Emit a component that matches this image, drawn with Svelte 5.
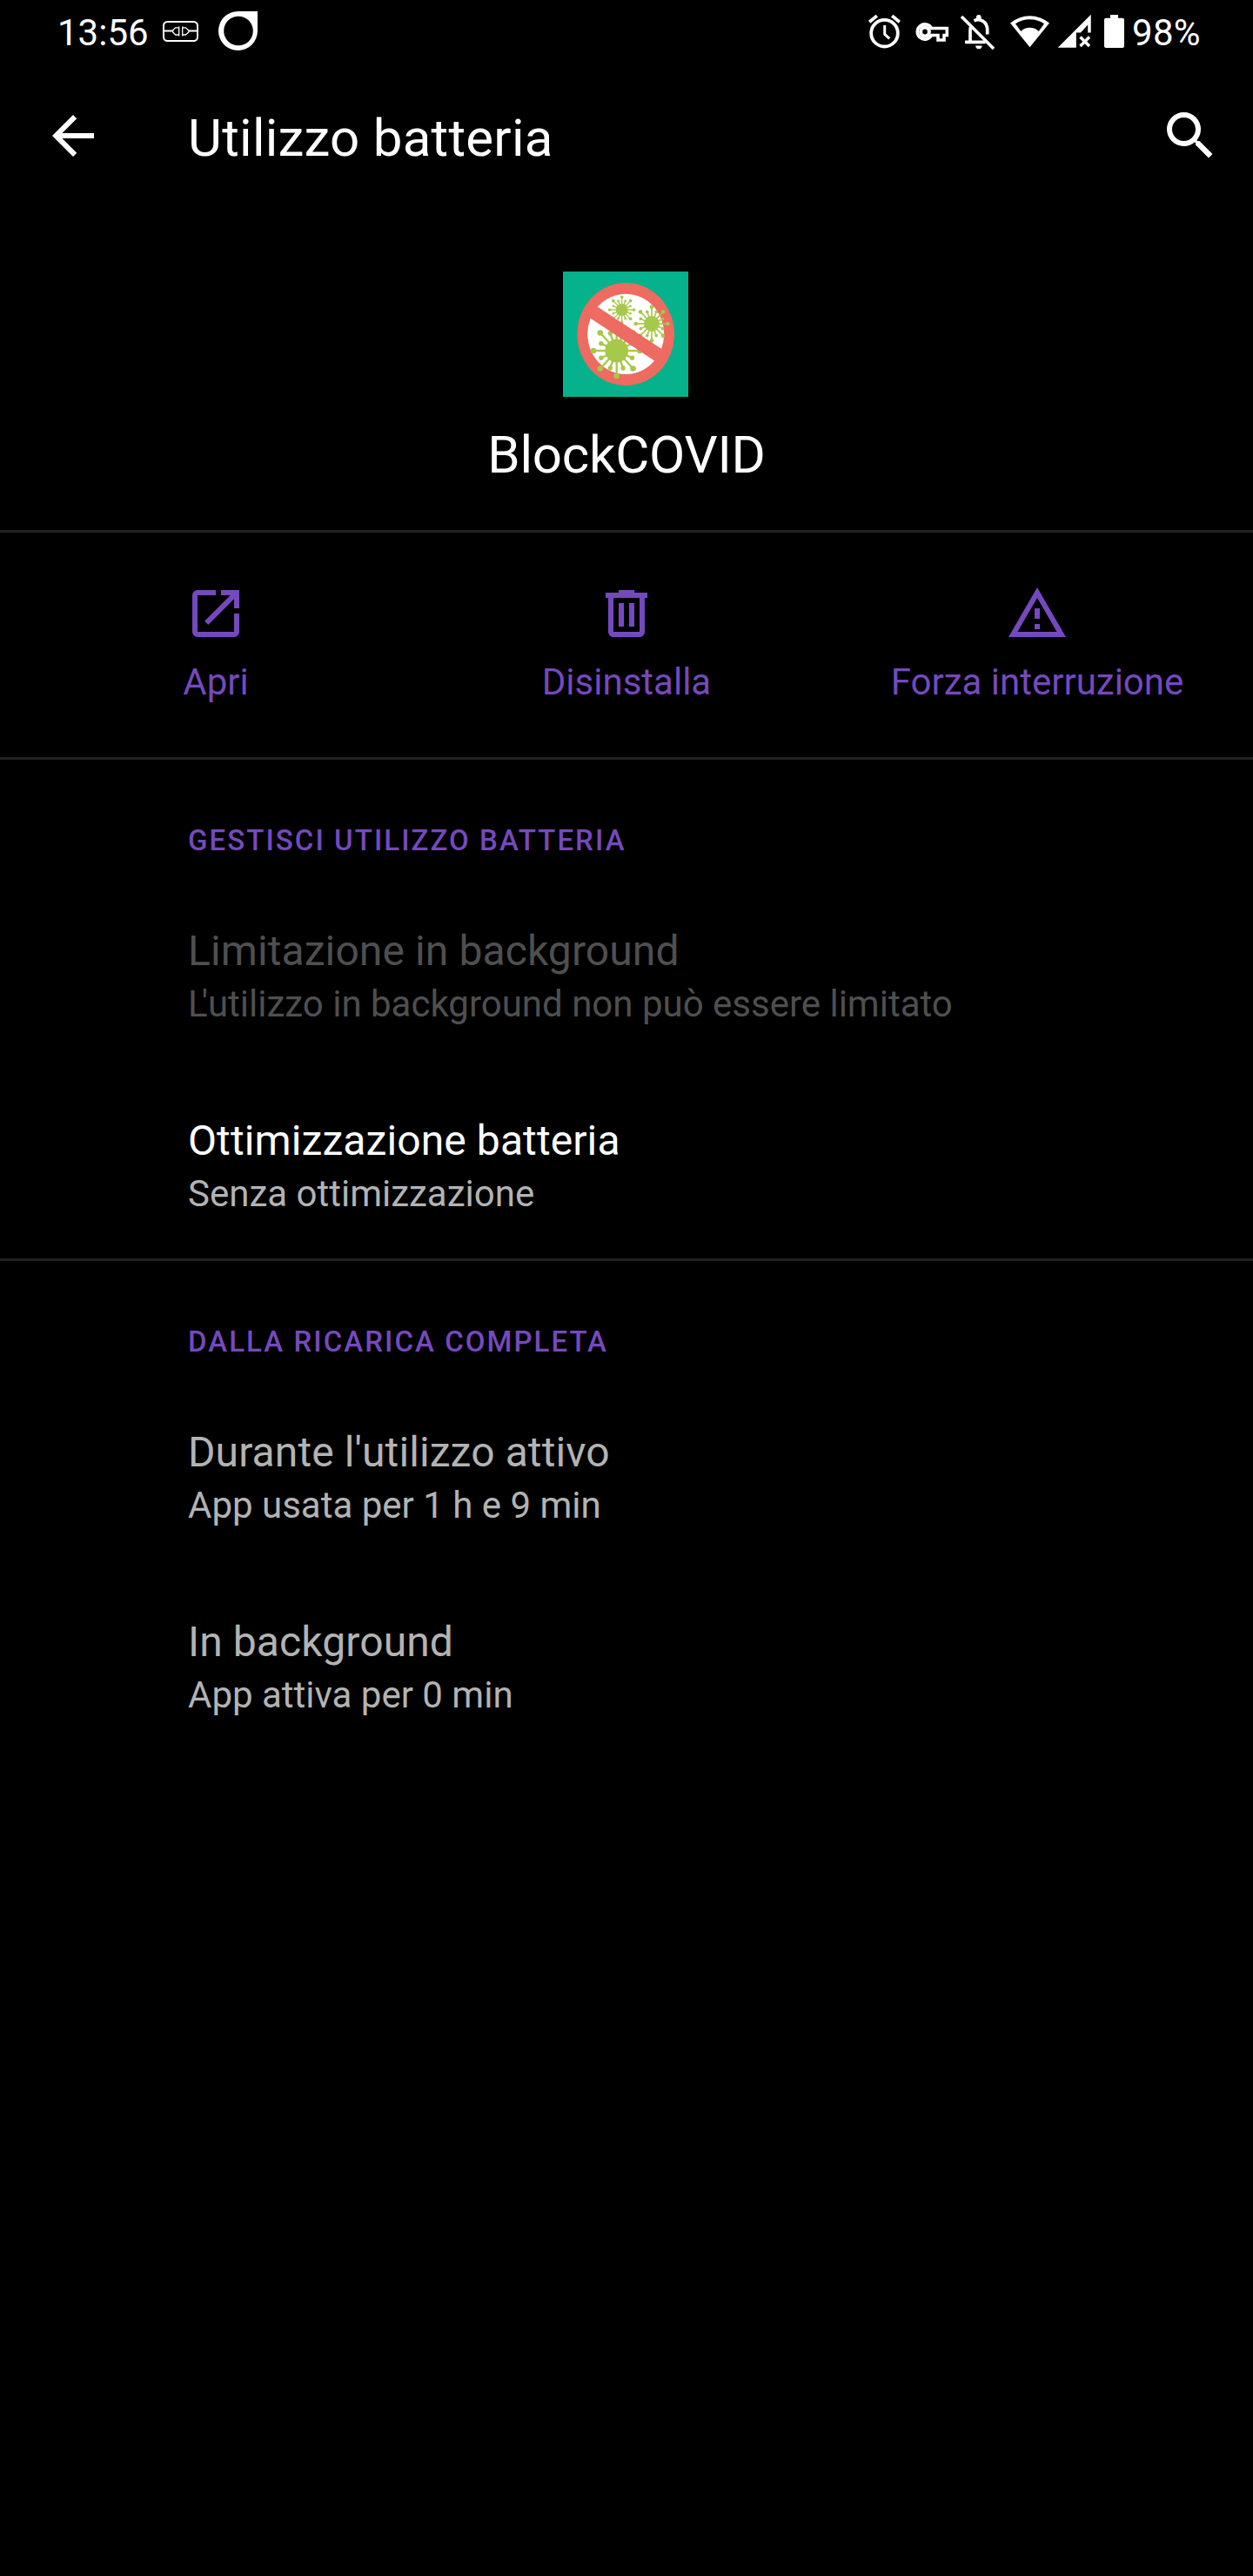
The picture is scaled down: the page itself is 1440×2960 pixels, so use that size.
<script>
  // Each virus: centre, body radius, long and short arm reach, arm width, tip radii
  const viruses = [
    { x: 236, y: 309, r: 40, lx: 80, ly: 87, sx: 58, sy: 65, w: 7, tip: 10, small: 8 },
    { x: 357, y: 216, r: 27, lx: 55, ly: 58, sx: 41, sy: 44, w: 5, tip: 7, small: 5.5 },
    { x: 254, y: 168, r: 21, lx: 42, ly: 44, sx: 32, sy: 33, w: 4, tip: 5.5, small: 4 }
  ];

  function arms(v) {
    return Array.from({ length: 16 }, (_, i) => {
      const a = (i * Math.PI) / 8;
      const long = i % 2 === 0;
      return {
        x: v.x + Math.cos(a) * (long ? v.lx : v.sx),
        y: v.y + Math.sin(a) * (long ? v.ly : v.sy),
        r: long ? v.tip : v.small
      };
    });
  }

  const actions = [
    {
      label: 'Apri',
      paths: [
        'M11 3H5a2 2 0 0 0-2 2v14a2 2 0 0 0 2 2h14a2 2 0 0 0 2-2v-7h-2v7H5V5h7V3z',
        'M14 3v2h3.600L7.700 14.900l1.400 1.400L19 6.400V10h2V3z'
      ]
    },
    {
      label: 'Disinstalla',
      paths: [
        'M15 4V3H9v1H4v2h1v13c0 1.100.9 2 2 2h10c1.100 0 2-.9 2-2V6h1V4h-5zm2 15H7V6h10v13z',
        'M9 8h2v9H9zm4 0h2v9h-2z'
      ]
    },
    {
      label: 'Forza interruzione',
      paths: ['M12 5.990L19.530 19H4.470L12 5.990M12 2L1 21h22L12 2zm1 14h-2v2h2v-2zm0-6h-2v4h2v-4z']
    }
  ];

  const sections = [
    {
      title: 'GESTISCI UTILIZZO BATTERIA',
      items: [
        { title: 'Limitazione in background', lead: 'L', summary: "'utilizzo in background non può essere limitato", tone: 'disabled' },
        { title: 'Ottimizzazione batteria', summary: 'Senza ottimizzazione', tone: 'active' }
      ]
    },
    {
      title: 'DALLA RICARICA COMPLETA',
      items: [
        { title: "Durante l'utilizzo attivo", summary: 'App usata per 1 h e 9 min', tone: 'info' },
        { title: 'In background', summary: 'App attiva per 0 min', tone: 'info' }
      ]
    }
  ];
</script>

<div class="screen">
  <div class="status">
    <span class="clock">13:56</span>
    <svg class="left-icons" width="120" height="72" viewBox="180 0 120 72" fill="none" stroke="#fff">
      <rect x="188" y="24.900" width="39" height="22.200" rx="4.500" stroke-width="2" />
      <path d="M188 35.500h10M217 35.500h10" stroke-width="1.900" />
      <path d="M205.700 30.500v11M209.700 30.500v11" stroke-width="1.300" />
      <path d="M205.700 31.800h-4l-3 3v2.200l3 3h4M209.700 31.800h3.600l3.500 3v2.200l-3.500 3h-3.600" stroke-width="1.300" />
      <path d="M296 13V35.500A22.500 22.500 0 1 1 273.500 13ZM274 18.700A16.800 16.800 0 1 0 274 52.300A16.800 16.800 0 1 0 274 18.700Z" fill="#fff" fill-rule="evenodd" stroke="none" />
    </svg>
    <span class="spacer"></span>
    <svg width="54" height="72" viewBox="990 0 54 72" fill="none" stroke="#fff">
      <circle cx="1016.500" cy="38.200" r="15.300" stroke-width="3.800" />
      <path d="M1016.700 29v10.300l5.500 5" stroke-width="3" />
      <path d="M999.200 25.200l8.600-7.100M1033.800 25.200l-8.600-7.100" stroke-width="3.800" />
    </svg>
    <svg width="54" height="72" viewBox="1044 0 54 72" fill="none" stroke="#fff" stroke-width="3.600">
      <path d="M1070.500 32.500h17.800v8h-3.300v5.500h-7v-5.500h-7.500a8.600 8.600 0 1 1 0-8z" />
      <circle cx="1063" cy="36.500" r="4.900" stroke-width="4" />
    </svg>
    <svg width="54" height="72" viewBox="1098 0 54 72" fill="none" stroke="#fff" stroke-width="3.700">
      <path d="M1105 19l37 37" />
      <path d="M1109 48.300h23.500M1115 48v-13c0-2 .3-3.500 1-5M1119.500 23.800c6-3 15.200.2 15.200 10.700v5" />
      <path d="M1122 22v-2.300a2.800 2.800 0 0 1 5.600 0v2.300zM1121.200 52.500h7.400a3.700 3.700 0 0 1-7.400 0z" fill="#fff" stroke="none" />
    </svg>
    <svg width="59" height="72" viewBox="1152 0 59 72">
      <path fill="#fff" fill-rule="evenodd" d="M1183.500 54.300L1161 26.500a35 35 0 0 1 45 0ZM1173.300 36a14.500 14.500 0 0 1 20.400 0L1200 27.300a30 30 0 0 0-33 0Z" />
    </svg>
    <svg width="51" height="72" viewBox="1211 0 51 72">
      <path fill="#fff" d="M1215.700 54.800L1253.700 16.800V37.500H1250.200V28.500L1242 37.500H1236.800V54.800Z" />
      <path d="M1241.500 42.500l10.500 10.500M1252 42.500l-10.500 10.500" stroke="#fff" stroke-width="3.400" />
    </svg>
    <svg width="37" height="72" viewBox="1262 0 37 72">
      <path fill="#fff" d="M1276 17h9v3.700h5a2 2 0 0 1 2 2v30.200a2 2 0 0 1-2 2h-19a2 2 0 0 1-2-2V22.700a2 2 0 0 1 2-2h5z" />
    </svg>
    <span class="percent">98%</span>
  </div>

  <header class="app-bar">
    <svg class="icon" viewBox="0 0 24 24" fill="#fff"><path d="M20 11H7.830l5.590-5.590L12 4l-8 8 8 8 1.410-1.410L7.830 13H20v-2z" /></svg>
    <h1>Utilizzo batteria</h1>
    <svg class="icon" viewBox="0 0 24 24" fill="#fff"><path d="M15.500 14h-.79l-.28-.27A6.471 6.471 0 0 0 16 9.500 6.500 6.500 0 1 0 9.500 16c1.610 0 3.090-.59 4.230-1.570l.27.28v.79l5 4.990L20.490 19l-4.990-5zm-6 0C7.010 14 5 11.990 5 9.500S7.010 5 9.500 5 14 7.010 14 9.500 11.990 14 9.500 14z" /></svg>
  </header>

  <section class="app">
    <svg class="logo" viewBox="51 36 432 432">
      <rect x="51" y="36" width="432" height="432" fill="#05b28b" />
      <ellipse cx="267.500" cy="252" rx="167.500" ry="177" fill="#ed6b61" />
      <ellipse cx="267.500" cy="251.500" rx="132" ry="138.500" fill="#fff" />
      {#each viruses as v}
        <g fill="#a7c84a" stroke="#a7c84a">
          {#each arms(v) as arm}
            <line x1={v.x} y1={v.y} x2={arm.x} y2={arm.y} stroke-width={v.w} />
            <circle cx={arm.x} cy={arm.y} r={arm.r} stroke="none" />
          {/each}
          <circle cx={v.x} cy={v.y} r={v.r} stroke="none" />
        </g>
      {/each}
      <path d="M171 158L390 302L420 310L390 365L365 343L147 198L130 170Z" fill="#ed6b61" />
    </svg>
    <h2>BlockCOVID</h2>
  </section>

  <nav class="actions">
    {#each actions as action}
      <div class="action">
        <svg class="icon" viewBox="0 0 24 24" fill="currentColor">
          {#each action.paths as d}<path {d} />{/each}
        </svg>
        <span>{action.label}</span>
      </div>
    {/each}
  </nav>

  {#each sections as section}
    <section class="group">
      <h3>{section.title}</h3>
      {#each section.items as item}
        <div class="item {item.tone}">
          <div class="title">{item.title}</div>
          <div class="summary">{#if item.lead}<span class="lead">{item.lead}</span>{/if}{item.summary}</div>
        </div>
      {/each}
    </section>
  {/each}
</div>

<style>
  :global(body) {
    margin: 0;
    background: #000;
  }
  .screen {
    width: 1440px;
    height: 2960px;
    overflow: hidden;
    background: #000;
    color: #fff;
    font-family: Roboto, 'Liberation Sans', sans-serif;
  }
  svg {
    display: block;
    flex: none;
  }
  h1, h2, h3 {
    margin: 0;
    font-weight: 400;
  }
  .icon {
    width: 72px;
    height: 72px;
  }
  .status {
    display: flex;
    height: 72px;
    font-size: 42px;
    line-height: 75px;
  }
  .clock {
    width: 114px;
    padding-left: 66px;
    white-space: nowrap;
  }
  .spacer {
    flex: 1;
  }
  .percent {
    width: 139px;
    padding-left: 2px;
    letter-spacing: 0.3px;
    white-space: nowrap;
  }
  .app-bar {
    display: flex;
    align-items: center;
    height: 168px;
    padding: 0 36px 0 48px;
  }
  .app-bar h1 {
    flex: 1;
    padding: 5px 0 0 96px;
    font-size: 60px;
    line-height: 70px;
    letter-spacing: 0.25px;
  }
  .app {
    display: flex;
    flex-direction: column;
    align-items: center;
    height: 297px;
    padding-top: 72px;
    border-bottom: 3px solid #212121;
  }
  .logo {
    width: 144px;
    height: 144px;
    margin-right: 2px;
  }
  .app h2 {
    margin-top: 32px;
    font-size: 60px;
    line-height: 70px;
    letter-spacing: -0.2px;
  }
  .actions {
    display: grid;
    grid-template-columns: repeat(3, 1fr);
    height: 201px;
    padding: 57px 12px 0;
    color: #7549bd;
    font-size: 42px;
    line-height: 50px;
  }
  .action {
    display: flex;
    flex-direction: column;
    align-items: center;
    gap: 18px;
    white-space: nowrap;
  }
  .group {
    border-top: 3px solid #212121;
  }
  .group h3 {
    padding: 73px 0 24px 216px;
    color: #7549bd;
    font-size: 33px;
    font-weight: 500;
    line-height: 40px;
    letter-spacing: 2.05px;
  }
  .item {
    padding: 50px 48px 46px 216px;
  }
  .title {
    font-size: 48px;
    line-height: 66px;
    letter-spacing: 0.1px;
  }
  .summary {
    color: #b3b3b3;
    font-size: 42px;
    line-height: 56px;
  }
  .lead {
    letter-spacing: -7px;
  }
  .disabled, .disabled .summary {
    color: #4f4f4f;
  }
  .info {
    color: #b3b3b3;
  }
</style>
